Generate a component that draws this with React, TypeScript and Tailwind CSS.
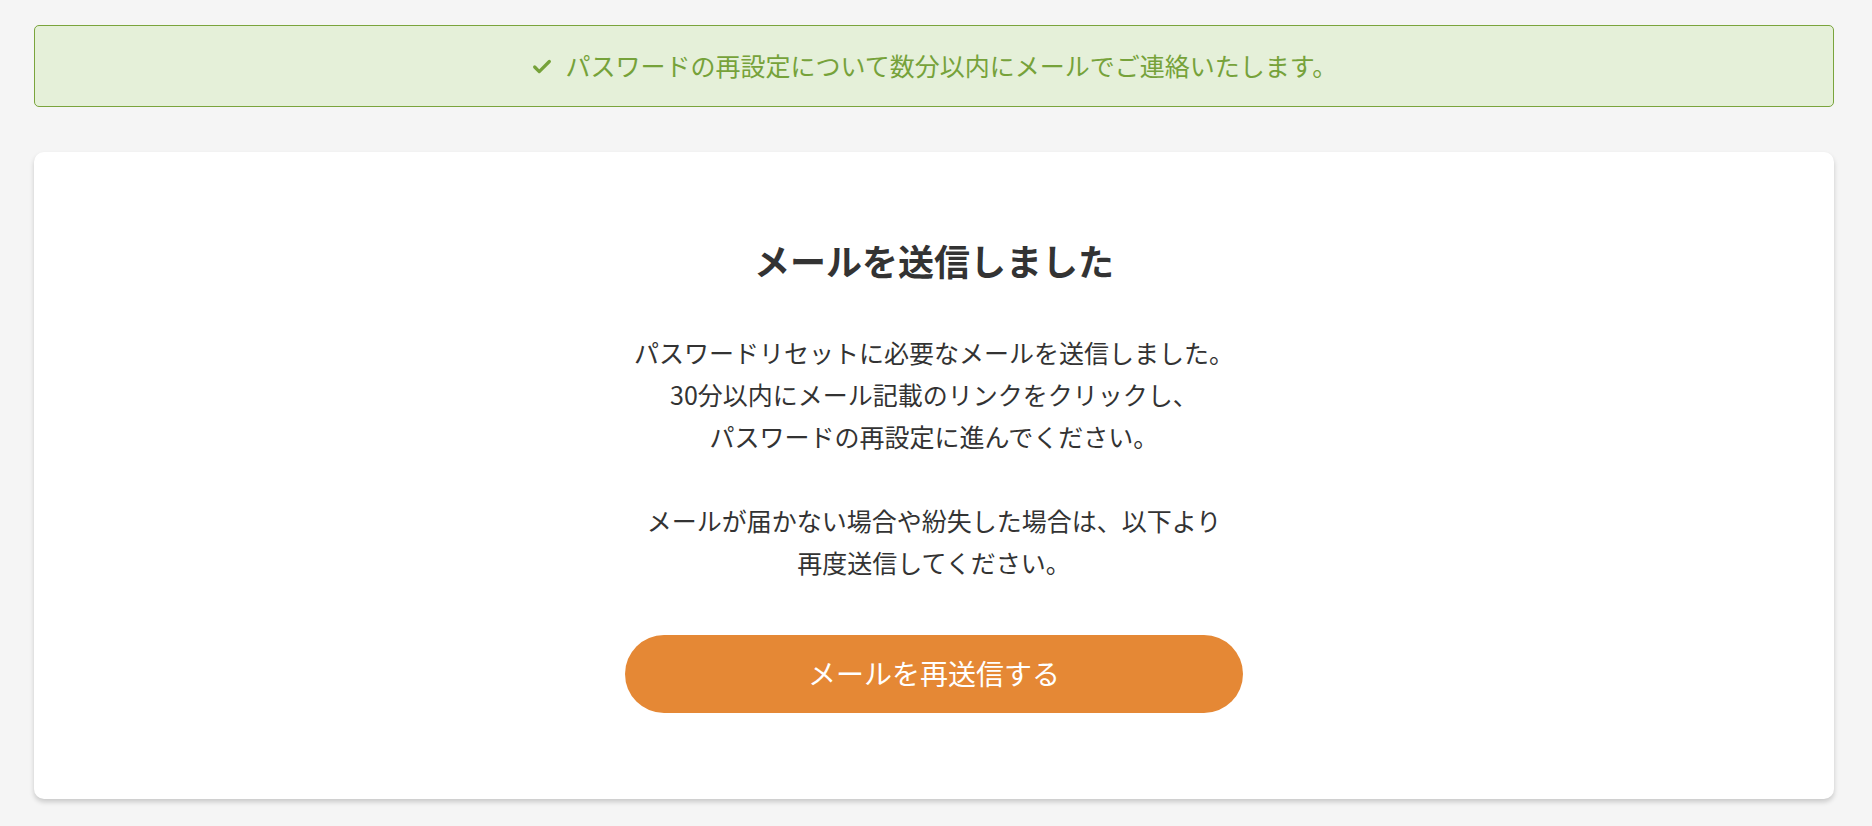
import { Check } from "lucide-react";

const FONT = { fontFamily: '"Noto Sans CJK JP", "Noto Sans", sans-serif' };

const NoticeBar = () => (
  <div className="flex h-[82px] items-center justify-center gap-[13px] rounded-[5px] border border-[#7aa43c] bg-[#e5f0d9] text-[25px] text-[#76a23a]">
    <Check size={22} strokeWidth={3.5} className="mt-[2px]" />
    <span>パスワードの再設定について数分以内にメールでご連絡いたします。</span>
  </div>
);

const App = () => {
  return (
    <div className="min-h-screen bg-[#f5f5f5] pt-[25px] pl-[34px]" style={FONT}>
      <div className="w-[1800px]">
        <NoticeBar />

        {/* sent card */}
        <div className="mt-[45px] flex flex-col items-center rounded-[10px] bg-white pt-[82px] pb-[86px] text-[#333333] shadow-[0_3px_5px_rgba(0,0,0,0.18)]">
          <h1 className="text-[36px] leading-[52px] font-bold">メールを送信しました</h1>

          <div className="mt-[45px] text-center text-[25px] leading-[42px]">
            <p>
              パスワードリセットに必要なメールを送信しました。
              <br />
              30分以内にメール記載のリンクをクリックし、
              <br />
              パスワードの再設定に進んでください。
            </p>
            <p className="mt-[42px]">
              メールが届かない場合や紛失した場合は、以下より
              <br />
              再度送信してください。
            </p>
          </div>

          <button className="mt-[52px] h-[78px] w-[618px] rounded-full bg-[#e58835] pb-[2px] text-[28px] text-white">
            メールを再送信する
          </button>
        </div>
      </div>
    </div>
  );
};

export default App;
